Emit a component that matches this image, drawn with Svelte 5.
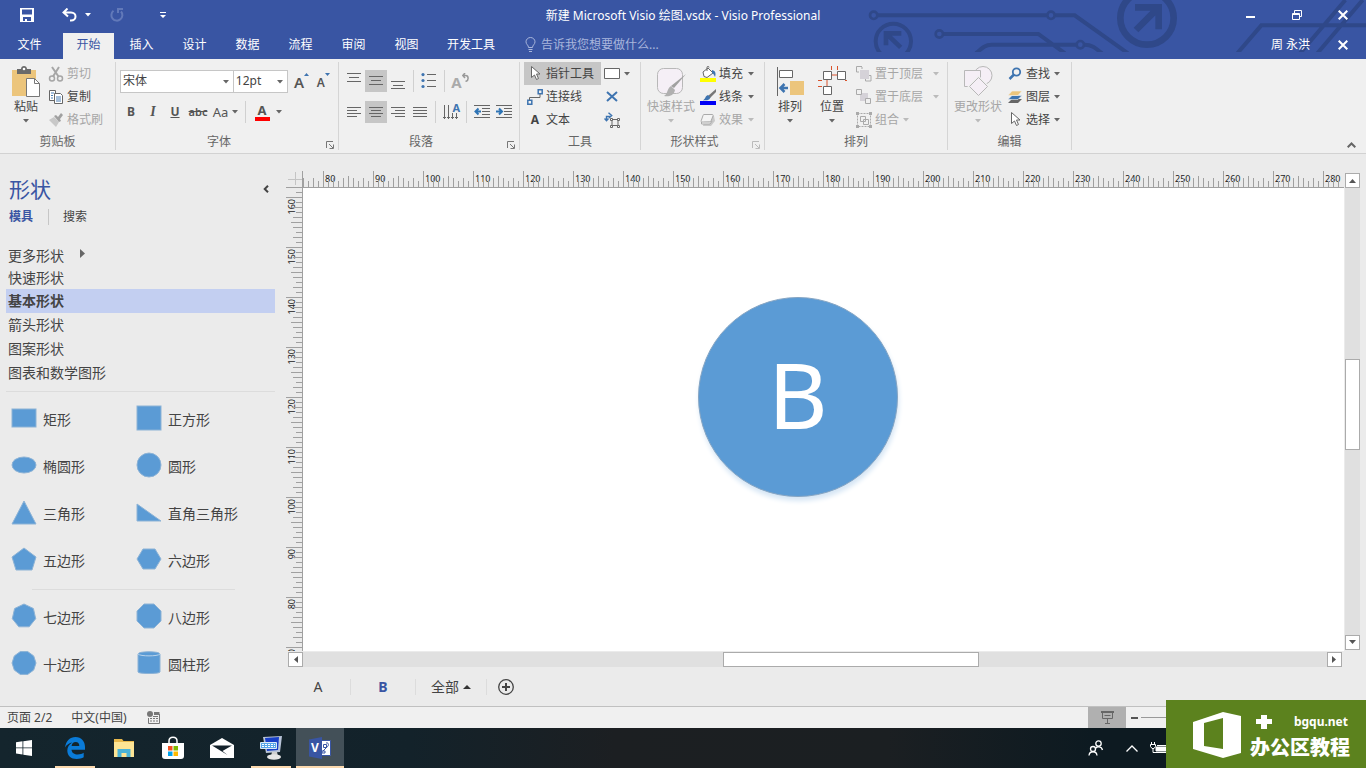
<script>
    const tabs = ['文件', '开始', '插入', '设计', '数据', '流程', '审阅', '视图', '开发工具'];
    const stencils = ['更多形状', '快速形状', '基本形状', '箭头形状', '图案形状', '图表和数学图形'];

    const basicShapes = [
        { name: '矩形', kind: 'rect', h: 18 },
        { name: '正方形', kind: 'rect', h: 24 },
        { name: '椭圆形', kind: 'ellipse', ry: 8 },
        { name: '圆形', kind: 'ellipse', ry: 12 },
        { name: '三角形', kind: 'poly', points: '12,1 24,24 0,24' },
        { name: '直角三角形', kind: 'poly', points: '0,4 0,21 24,21' },
        { name: '五边形', kind: 'poly', points: '12,1 24,10 20,23 4,23 0,10' },
        { name: '六边形', kind: 'poly', points: '6,2 18,2 24,12 18,22 6,22 0,12' }
    ];

    const moreShapes = [
        { name: '七边形', kind: 'poly', points: ring(7, -90) },
        { name: '八边形', kind: 'poly', points: '7,0 17,0 24,7 24,17 17,24 7,24 0,17 0,7' },
        { name: '十边形', kind: 'poly', points: ring(10, -72) },
        { name: '圆柱形', kind: 'can' }
    ];

    const hTicks = makeTicks(76, 284, 1);
    const vTicks = makeTicks(161, 60, -1);

    let activeTab = '开始';
    let activeStencil = '基本形状';
    let font = '宋体';
    let size = '12pt';
    let zoom = 50;
    let help = '';

    const nodes = [{ text: 'B', x: 395, y: 109, d: 200 }];

    function ring(count, start) {
        const out = [];
        for (let i = 0; i < count; i++) {
            const a = (start + i * 360 / count) * Math.PI / 180;
            out.push((12 + 12 * Math.cos(a)).toFixed(1) + ',' + (12 + 12 * Math.sin(a)).toFixed(1));
        }
        return out.join(' ');
    }

    function makeTicks(from, to, step) {
        const out = [];
        for (let v = from, i = 0; v !== to; v += step, i++) {
            let len = 6;
            if (v % 10 === 0) len = 16;
            else if (v % 5 === 0) len = 11;
            else if (v % 2 === 0) len = 9;
            out.push({ v, pos: i * 5, len });
        }
        return out;
    }
</script>

{#snippet caret()}
    <svg class="caret" width="6" height="4" viewBox="0 0 6 4" aria-hidden="true"><path d="M0 0h6L3 3.5z" fill="currentColor" /></svg>
{/snippet}

{#snippet launcher(name)}
    <button class="launcher" aria-label={name}>
        <svg width="8" height="8" viewBox="0 0 8 8" fill="none" stroke="currentColor"><path d="M.5 7V.5H7M3 3l4 4M7.500 3.500v4h-4" /></svg>
    </button>
{/snippet}

{#snippet shapeGrid(list)}
    <div class="shape-grid">
        {#each list as s}
            <button class="shape">
                <svg width="26" height="26" viewBox="-1 -1 26 26" fill="#5b9bd5" stroke="#8db3d6" stroke-width="1">
                    {#if s.kind === 'rect'}
                        <rect x="0" y={12 - s.h / 2} width="24" height={s.h} />
                    {:else if s.kind === 'ellipse'}
                        <ellipse cx="12" cy="12" rx="12" ry={s.ry} />
                    {:else if s.kind === 'poly'}
                        <polygon points={s.points} />
                    {:else}
                        <path d="M1 3c0-3 22-3 22 0v18c0 2-22 2-22 0z" />
                        <path d="M1 3c2 2.500 20 2.500 22 0" stroke="#b9d3ea" />
                    {/if}
                </svg>
                <span>{s.name}</span>
            </button>
        {/each}
    </div>
{/snippet}

<div class="app">
    <header class="header">
        <svg class="circuit" width="506" height="52" viewBox="0 0 1518 156" fill="none" stroke="#2f4889" stroke-width="12" aria-hidden="true">
            <circle cx="41" cy="46" r="11" stroke-width="8" />
            <circle cx="573" cy="46" r="11" stroke-width="8" />
            <circle cx="238" cy="102" r="11" stroke-width="8" />
            <circle cx="661" cy="134" r="11" stroke-width="8" />
            <path d="M54 46h506M586 46h58l160 114M251 102h284l80 58M348 160c20-18 30-26 46-26h254M674 134c20 0 30 8 52 26M1132 160l72-84h314M1320 160L1456 0M1372 160L1508 0" />
            <circle cx="861" cy="54" r="80" stroke-width="20" />
            <path d="M828 90l62-62M825 22h71v66" stroke-width="20" />
            <circle cx="100" cy="124" r="53" stroke-width="12" />
            <path d="M122 142L82 104M78 136v-36h46" stroke-width="14" />
        </svg>

        <div class="titlebar">
            <div class="quick">
                <button class="q-save" aria-label="保存">
                    <svg width="14" height="14" viewBox="0 0 14 14"><path fill="#fff" fill-rule="evenodd" d="M0 0h14v14H0zM2 1.500v5h10v-5zM3 9v4h2v-2h2v2h4V9z" /></svg>
                </button>
                <button class="q-undo" aria-label="撤消">
                    <svg width="15" height="14" viewBox="0 0 15 14" fill="none" stroke="#fff" stroke-width="2"><path d="M5.500 0.500L1.500 4.500l4.500 4M2 4.500h7c6 0 6 8 0 8H8" /></svg>
                    {@render caret()}
                </button>
                <button class="q-redo" aria-label="重复">
                    <svg width="14" height="14" viewBox="0 0 14 14" fill="none" stroke="#6279b9" stroke-width="2"><path d="M3.500 2.800A5.500 5.500 0 1 0 11 3.500M8 5V1h5" /></svg>
                </button>
                <button class="q-more" aria-label="自定义快速访问工具栏">
                    <svg width="6" height="6" viewBox="0 0 6 6" fill="#fff"><path d="M0 0h6v1H0zM0 3h6L3 6z" /></svg>
                </button>
            </div>
            <h1>新建 Microsoft Visio 绘图.vsdx - Visio Professional</h1>
            <div class="window-buttons">
                <button aria-label="最小化"><svg width="10" height="10" viewBox="0 0 10 10"><path d="M0 6h9v2H0z" fill="#fff" /></svg></button>
                <button aria-label="还原"><svg width="10" height="10" viewBox="0 0 10 10" fill="none" stroke="#fff"><path d="M.5 3.500h7v6h-7zM.5 4.500h7M2.500 3V.5h7v6H8" /></svg></button>
                <button aria-label="关闭"><svg width="10" height="10" viewBox="0 0 10 10" stroke="#fff" stroke-width="2"><path d="M.7.7l8.600 8.600M9.300.7L.7 9.300" /></svg></button>
            </div>
        </div>

        <nav class="tabs">
            {#each tabs as tab}
                <button class="tab" class:file={tab === '文件'} class:active={tab === activeTab} on:click={() => activeTab = tab}>{tab}</button>
            {/each}
            <label class="tell">
                <svg width="11" height="15" viewBox="0 0 11 15" fill="none" stroke="#a9b6dc"><path d="M3.500 10.500C3.500 8 1 7.500 1 4.800a4.500 4.300 0 0 1 9 0c0 2.700-2.500 3.200-2.500 5.700zM3.500 12.500h4M4 14.500h3" /></svg>
                <input type="text" bind:value={help} placeholder="告诉我您想要做什么..." aria-label="告诉我您想要做什么" />
            </label>
            <button class="user">周 永洪</button>
            <button class="close-doc" aria-label="关闭窗口"><svg width="10" height="10" viewBox="0 0 10 10" stroke="#fff" stroke-width="2"><path d="M.7.7l8.600 8.600M9.300.7L.7 9.300" /></svg></button>
        </nav>
    </header>

    <div class="ribbon">
        <section class="group clipboard">
            <div class="body">
                <button class="big">
                    <svg width="30" height="32" viewBox="0 0 30 32">
                        <path fill="#ecc57c" d="M1 4h24v26H1z" />
                        <path fill="#6a6a6a" d="M6 3h4c0-4 6-4 6 0h4v5H6z" /><circle cx="13" cy="3" r="1.300" fill="#fff" />
                        <path d="M15.500 12.500h8l5 5v13h-13z" fill="#fff" stroke="#777" /><path d="M23.500 12.500v5h5" fill="none" stroke="#777" />
                    </svg>
                    <span>粘贴</span>
                    {@render caret()}
                </button>
                <div class="col">
                    <button class="cmd off">
                        <svg width="16" height="16" viewBox="0 0 16 16" fill="none" stroke="currentColor" stroke-width="1.500"><path d="M4 1l6.500 9.500M11 1L5 10.500" stroke-width="2" /><circle cx="4" cy="12.500" r="2.500" /><circle cx="12" cy="12.500" r="2.500" /></svg>
                        剪切
                    </button>
                    <button class="cmd">
                        <svg width="16" height="16" viewBox="0 0 16 16" fill="#fff" stroke="#666"><path d="M1.500 1.500h6v10h-6z" /><path d="M6.500 4.500h6l2 2v8h-8z" /><path d="M3 4h3M3 6.500h2M3 9h2M8 8h5M8 10h5M8 12h5" stroke="#4a7fb5" /></svg>
                        复制
                    </button>
                    <button class="cmd off">
                        <svg width="16" height="16" viewBox="0 0 16 16"><path fill="#c8c8c8" d="M1 8l5-3 5 5-3 5z" /><path fill="#a0a0a0" d="M6 4l2-1 2 2 3-4 2 2-3 4 1 2-2 1z" /></svg>
                        格式刷
                    </button>
                </div>
            </div>
            <div class="caption"><span>剪贴板</span></div>
        </section>

        <section class="group font">
            <div class="body stack">
                <div class="row">
                    <label class="combo wide"><select bind:value={font} aria-label="字体"><option>宋体</option><option>黑体</option></select>{@render caret()}</label>
                    <label class="combo"><select bind:value={size} aria-label="字号"><option>12pt</option><option>14pt</option></select>{@render caret()}</label>
                    <button class="tool sized" aria-label="增大字号"><b class="a-large">A</b><svg width="5" height="4" viewBox="0 0 5 4"><path d="M2.500 0L5 3H0z" fill="#3e74b0" /></svg></button>
                    <button class="tool sized" aria-label="减小字号"><b class="a-small">A</b><svg width="5" height="4" viewBox="0 0 5 4"><path d="M2.500 3L5 0H0z" fill="#3e74b0" /></svg></button>
                </div>
                <div class="row">
                    <button class="tool"><b>B</b></button>
                    <button class="tool"><i>I</i></button>
                    <button class="tool"><b><u>U</u></b></button>
                    <button class="tool strike"><s>abc</s></button>
                    <button class="tool case">Aa{@render caret()}</button>
                    <span class="bar"></span>
                    <button class="tool case color"><b>A</b>{@render caret()}</button>
                </div>
            </div>
            <div class="caption"><span>字体</span>{@render launcher('字体设置')}</div>
        </section>

        <section class="group paragraph">
            <div class="body stack">
                <div class="row">
                    <button class="tool" aria-label="顶端对齐"><svg width="16" height="16" viewBox="0 0 16 16" stroke="#666"><path d="M1 .5h14M3 4.500h10M1 8.500h14" /></svg></button>
                    <button class="tool on" aria-label="中部对齐"><svg width="16" height="16" viewBox="0 0 16 16" stroke="#666"><path d="M1 3.500h14M3 7.500h10M1 11.500h14" /></svg></button>
                    <button class="tool" aria-label="底端对齐"><svg width="16" height="16" viewBox="0 0 16 16" stroke="#666"><path d="M1 8.500h14M3 12.500h10M1 15.500h14" /></svg></button>
                    <span class="bar"></span>
                    <button class="tool" aria-label="项目符号"><svg width="16" height="16" viewBox="0 0 16 16" stroke="#666"><path d="M6 1.500h9M6 7.500h9M6 13.500h9" /><g fill="#3e74b0" stroke="none"><circle cx="2" cy="1.600" r="1.600" /><circle cx="2" cy="7.500" r="1.600" /><circle cx="2" cy="13.500" r="1.600" /></g></svg></button>
                    <span class="bar"></span>
                    <button class="tool turn" aria-label="旋转文本"><b>A</b><svg width="7" height="9" viewBox="0 0 7 9" fill="none" stroke="#999" stroke-width="1.500"><path d="M3 0L.8 2.500 3 5M1 2.500h2.500c3.500 0 3.500 5 0 6" /></svg></button>
                </div>
                <div class="row">
                    <button class="tool" aria-label="左对齐"><svg width="16" height="16" viewBox="0 0 16 16" stroke="#666"><path d="M1 3.500h14M1 6.500h10M1 9.500h14M1 12.500h10" /></svg></button>
                    <button class="tool on" aria-label="居中"><svg width="16" height="16" viewBox="0 0 16 16" stroke="#666"><path d="M1 3.500h14M3 6.500h10M1 9.500h14M3 12.500h10" /></svg></button>
                    <button class="tool" aria-label="右对齐"><svg width="16" height="16" viewBox="0 0 16 16" stroke="#666"><path d="M1 3.500h14M5 6.500h10M1 9.500h14M5 12.500h10" /></svg></button>
                    <button class="tool" aria-label="两端对齐"><svg width="16" height="16" viewBox="0 0 16 16" stroke="#666"><path d="M1 3.500h14M1 6.500h14M1 9.500h14M1 12.500h14" /></svg></button>
                    <span class="bar"></span>
                    <button class="tool vert" aria-label="文字方向"><svg width="16" height="16" viewBox="0 0 16 16" fill="none" stroke="#666"><path d="M1.500 1v14M5.500 1v14M9.500 9v6M13.500 9v6M0 13.500h3M4 13.500h3M8 13.500h3M12 13.500h3" /></svg><b>A</b></button>
                    <span class="bar"></span>
                    <button class="tool" aria-label="减少缩进"><svg width="16" height="16" viewBox="0 0 16 16" stroke="#666"><path d="M0 1.500h16M8 4.500h8M8 7.500h8M8 10.500h8M0 13.500h16" /><path d="M7 7.500H1.500M4.500 4.500l-3 3 3 3" fill="none" stroke="#2e74b5" stroke-width="2" /></svg></button>
                    <button class="tool" aria-label="增加缩进"><svg width="16" height="16" viewBox="0 0 16 16" stroke="#666"><path d="M0 1.500h16M8 4.500h8M8 7.500h8M8 10.500h8M0 13.500h16" /><path d="M0 7.500h5.500M3 4.500l3 3-3 3" fill="none" stroke="#2e74b5" stroke-width="2" /></svg></button>
                </div>
            </div>
            <div class="caption"><span>段落</span>{@render launcher('段落设置')}</div>
        </section>

        <section class="group tools">
            <div class="body">
                <div class="col">
                    <button class="cmd on"><svg width="16" height="16" viewBox="0 0 16 16"><path d="M4.500 .5v11l3-2.500 2 4.500 2-1-2-4.500h3.500z" fill="#fff" stroke="#666" /></svg>指针工具</button>
                    <button class="cmd"><svg width="16" height="16" viewBox="0 0 16 16" fill="none" stroke="#3e74b0" stroke-width="1.500"><path d="M.8 11.200h4v4h-4zM11.200.8h4v4h-4z" /><path d="M2.500 11V8.500h10.500V5" stroke="#666" stroke-width="1" /></svg>连接线</button>
                    <button class="cmd"><b class="text-icon">A</b>文本</button>
                </div>
                <div class="col narrow">
                    <button class="cmd" aria-label="矩形"><svg width="16" height="16" viewBox="0 0 16 16"><path d="M.5 2.500h15v10H.5z" fill="#fff" stroke="#666" /></svg>{@render caret()}</button>
                    <button class="cmd" aria-label="连接点"><svg width="16" height="16" viewBox="0 0 16 16" fill="none" stroke="#3e74b0" stroke-width="2"><path d="M3 3l10 9M13 3L3 12" /></svg></button>
                    <button class="cmd" aria-label="文本块"><svg width="16" height="16" viewBox="0 0 16 16" fill="none" stroke="#666"><path d="M8 7.500h6v6H8z" /><path d="M6.500 6.500h2v2h-2zM13.500 6.500h2v2h-2zM6.500 13.500h2v2h-2zM13.500 13.500h2v2h-2z" fill="#fff" /><path d="M2.500 9V4.500h4M.5 6.500L2.500 8.700l2-2.200M4.500 0.700L7.700 3.500 5 6" stroke="#3e74b0" stroke-width="1.400" /></svg></button>
                </div>
            </div>
            <div class="caption"><span>工具</span></div>
        </section>

        <section class="group styles">
            <div class="body">
                <button class="big off">
                    <svg width="30" height="32" viewBox="0 0 30 32"><rect x="1.500" y="2.500" width="25" height="25" rx="6" fill="#f5eff6" stroke="#b8b8b8" /><path d="M30 8L18 22l-3-2z" fill="#a0a0a0" /><path d="M15 20l4 4c-1 6-7 7-11 6 4-2 3-8 7-10z" fill="#b0b0b0" /></svg>
                    <span>快速样式</span>
                    {@render caret()}
                </button>
                <div class="col">
                    <button class="cmd"><svg width="16" height="16" viewBox="0 0 16 16"><path fill="#fff" stroke="#666" d="M3 6l5-4 5 5-6 4.500-3-1z" /><path d="M7 5V1.500c0-1.500 2-1.500 2 0" fill="none" stroke="#666" /><path fill="#3e74b0" d="M12 4c4 1 4 4 3 7-1-2-1-3-3-4z" /><path fill="#ffff00" d="M0 12h16v4H0z" /></svg>填充{@render caret()}</button>
                    <button class="cmd"><svg width="16" height="16" viewBox="0 0 16 16"><path fill="#777" d="M16 0v3l-6 6-2-2z" /><path fill="#3e74b0" d="M8 6l2.500 2.500C9 12 6 11 3 11.500 6 9 5 7 8 6z" /><path fill="#0000f5" d="M0 12h16v4H0z" /></svg>线条{@render caret()}</button>
                    <button class="cmd off"><svg width="16" height="16" viewBox="0 0 16 16"><path fill="#c9c9c9" d="M5 4h9l1 5-4 5H3z" /><path fill="#f4f4f4" stroke="#aaa" d="M4 2.500h8c1 0 1.500.5 1 1.500l-2 5c-.3.700-.7 1-1.500 1H2c-1 0-1-.5-.8-1.300L3 3.500c.2-.7.400-1 1-1zM1.500 10v2h8.500l2-3" /></svg>效果{@render caret()}</button>
                </div>
            </div>
            <div class="caption"><span>形状样式</span>{@render launcher('形状样式设置')}</div>
        </section>

        <section class="group arrange">
            <div class="body">
                <button class="big">
                    <svg width="30" height="32" viewBox="0 0 30 32"><path d="M2.500 1v29" stroke="#666" /><path d="M4.500 4.500h13v7h-13z" fill="#fff" stroke="#666" /><path fill="#ecc57c" d="M15 15h14v14H15z" /><path d="M13 22H6M9.500 18L5.500 22l4 4" fill="none" stroke="#3e74b0" stroke-width="2.500" /></svg>
                    <span>排列</span>
                    {@render caret()}
                </button>
                <button class="big">
                    <svg width="30" height="32" viewBox="0 0 30 32"><path d="M1 14.500h4M14.500 0v4M20.500 0v4M14 9h6M1 20.500h4M10 14v6M28 14.500h2" stroke="#d9532c" /><path d="M6.500 5.500h8v8h-8zM20.500 5.500h8v8h-8zM6.500 20.500h8v8h-8z" fill="#fff" stroke="#666" /></svg>
                    <span>位置</span>
                    {@render caret()}
                </button>
                <div class="col">
                    <button class="cmd off"><svg width="16" height="16" viewBox="0 0 16 16"><path fill="#d5d2d8" d="M4 4h9v9H4z" /><path d="M6 .5H.5V6H3M6 1v2M15 9.500v5.500H9.500v-2M13 9.500h2" fill="none" stroke="#aaa" /></svg>置于顶层{@render caret()}</button>
                    <button class="cmd off"><svg width="16" height="16" viewBox="0 0 16 16"><path fill="#d5d2d8" d="M4 4h8v8H4z" /><path d="M.5.5h5v5h-5zM9.500 9.500h5v5h-5z" fill="#f0f0f0" stroke="#aaa" /></svg>置于底层{@render caret()}</button>
                    <button class="cmd off snug"><svg width="16" height="16" viewBox="0 0 16 16" fill="none" stroke="#aaa"><path d="M1.500 1.500h13v13h-13z" stroke-dasharray="2 1" /><path d="M4.500 4.500h5v5h-5zM7.500 7.500h5v5h-5z" /><path d="M0 0h3v3H0zM13 0h3v3h-3zM0 13h3v3H0zM13 13h3v3h-3z" fill="#aaa" stroke="none" /></svg>组合{@render caret()}</button>
                </div>
            </div>
            <div class="caption"><span>排列</span></div>
        </section>

        <section class="group edit">
            <div class="body">
                <button class="big off">
                    <svg width="30" height="32" viewBox="0 0 30 32" fill="#f5eff6" stroke="#b8b8b8"><circle cx="20" cy="9.500" r="9" /><path d="M1.500 4.500h16v16h-16z" /><path d="M15.500 11.500l9 9-9 9-9-9z" stroke="#f0f0f0" stroke-width="3" /><path d="M15.500 11.500l9 9-9 9-9-9z" /></svg>
                    <span>更改形状</span>
                    {@render caret()}
                </button>
                <div class="col">
                    <button class="cmd"><svg width="16" height="16" viewBox="0 0 16 16" fill="none" stroke="#3e74b0"><circle cx="9.500" cy="6" r="3.700" stroke-width="1.800" /><path d="M7 8.500L2.500 13" stroke-width="2.500" /></svg>查找{@render caret()}</button>
                    <button class="cmd"><svg width="16" height="16" viewBox="0 0 16 16"><path fill="#666" d="M1 14l4-4h10l-4 4z" /><path fill="#3e74b0" stroke="#f0f0f0" stroke-width=".6" d="M1 10.500l4-4h10l-4 4z" /><path fill="#ecc57c" stroke="#f0f0f0" stroke-width=".6" d="M1 6.500l4-4.500h10l-4 4.500z" /></svg>图层{@render caret()}</button>
                    <button class="cmd"><svg width="16" height="16" viewBox="0 0 16 16"><path d="M4.500 .5v11l3-2.500 2 4.500 2-1-2-4.500h3.500z" fill="#fff" stroke="#666" /></svg>选择{@render caret()}</button>
                </div>
            </div>
            <div class="caption"><span>编辑</span></div>
        </section>

        <button class="collapse" aria-label="折叠功能区"><svg width="9" height="6" viewBox="0 0 9 6" fill="none" stroke="#666" stroke-width="2"><path d="M.7 5.300L4.500 1.500l3.800 3.800" /></svg></button>
    </div>

    <main class="workspace">
        <aside class="panel">
            <div class="panel-head">
                <h2>形状</h2>
                <button aria-label="最小化形状窗口"><svg width="6" height="8" viewBox="0 0 6 8" fill="none" stroke="#444" stroke-width="2"><path d="M5 .7L1.700 4 5 7.300" /></svg></button>
            </div>
            <div class="panel-tabs">
                <button class="active">模具</button>
                <button>搜索</button>
            </div>
            <div class="stencils">
                {#each stencils as name}
                    <button class:active={name === activeStencil} on:click={() => activeStencil = name}>
                        {name}
                        {#if name === '更多形状'}
                            <svg class="more" width="5" height="9" viewBox="0 0 5 9"><path d="M0 0l5 4.500L0 9z" fill="#666" /></svg>
                        {/if}
                    </button>
                {/each}
            </div>
            {@render shapeGrid(basicShapes)}
            <hr>
            {@render shapeGrid(moreShapes)}
        </aside>

        <div class="editor">
            <div class="corner"><svg width="14" height="14" viewBox="0 0 14 14" stroke="#c4c4c4"><path d="M0 8.500h14M7.500 1v13" /></svg></div>
            <div class="ruler-h">
                <svg width="100%" height="16">
                    {#each hTicks as t}
                        <rect x={t.pos} y={16 - t.len} width="1" height={t.len} fill="#a0a0a0" />
                        {#if t.v % 10 === 0}<text x={t.pos + 2} y="11">{t.v}</text>{/if}
                    {/each}
                </svg>
            </div>
            <div class="ruler-v">
                <svg width="16" height="100%">
                    {#each vTicks as t}
                        <rect x={16 - t.len} y={t.pos + 4} width={t.len} height="1" fill="#a0a0a0" />
                        {#if t.v % 10 === 0}<text transform="translate(9 {t.pos + 6}) rotate(-90)" text-anchor="end">{t.v}</text>{/if}
                    {/each}
                </svg>
            </div>
            <div class="canvas">
                {#each nodes as n}
                    <div class="node" style="left:{n.x}px;top:{n.y}px;width:{n.d}px;height:{n.d}px">{n.text}</div>
                {/each}
            </div>
            <div class="scroll-v">
                <button aria-label="向上滚动"><svg width="7" height="4" viewBox="0 0 7 4"><path d="M3.500 0L7 4H0z" fill="#555" /></svg></button>
                <span class="before"></span><span class="thumb"></span><span class="after"></span>
                <button aria-label="向下滚动"><svg width="7" height="4" viewBox="0 0 7 4"><path d="M3.500 4L7 0H0z" fill="#555" /></svg></button>
            </div>
            <div class="scroll-h">
                <button aria-label="向左滚动"><svg width="4" height="7" viewBox="0 0 4 7"><path d="M0 3.500L4 0v7z" fill="#555" /></svg></button>
                <span class="before"></span><span class="thumb"></span><span class="after"></span>
                <button aria-label="向右滚动"><svg width="4" height="7" viewBox="0 0 4 7"><path d="M4 3.500L0 0v7z" fill="#555" /></svg></button>
            </div>
            <div class="pages">
                <button>A</button>
                <button class="active">B</button>
                <button class="all">全部<svg width="8" height="4" viewBox="0 0 8 4"><path d="M4 0l4 4H0z" fill="#333" /></svg></button>
                <button class="add" aria-label="插入页"><svg width="16" height="16" viewBox="0 0 16 16" fill="none" stroke="#444"><circle cx="8" cy="8" r="7.300" stroke-width="1.300" /><path d="M4 8h8M8 4v8" stroke-width="2" /></svg></button>
            </div>
        </div>
    </main>

    <footer class="status">
        <span>页面 2/2</span>
        <button class="lang">中文(中国)</button>
        <button aria-label="宏录制"><svg width="13" height="13" viewBox="0 0 13 13"><circle cx="3" cy="3" r="3" fill="#777" /><path d="M7 1h5.500v3H7z" fill="#777" /><path d="M1.500 7v5.500h11V3" fill="none" stroke="#777" /><path d="M3 7.500h2M6 7.500h2M9 7.500h2M3 10h2M6 10h2M9 10h2M6 5.500h5" stroke="#777" /></svg></button>
        <div class="zoom">
            <button class="present" aria-label="演示模式"><svg width="13" height="13" viewBox="0 0 13 13" fill="none" stroke="#666"><path d="M0 1h13" stroke-width="2" /><path d="M1.500 2v5.500h10V2M3.500 4.500h6M6.500 8v4M4 12.500h5" /></svg></button>
            <button class="minus" aria-label="缩小"><svg width="7" height="2" viewBox="0 0 7 2"><path d="M0 0h7v2H0z" fill="#555" /></svg></button>
            <input type="range" min="0" max="100" bind:value={zoom} aria-label="显示比例" />
        </div>
    </footer>

    <div class="taskbar">
        <button class="start" aria-label="开始菜单"><svg width="16" height="16" viewBox="0 0 16 16" fill="#fff"><path d="M0 2.200L6.500 1.300v6.200H0zM7.300 1.200L16 0v7.500H7.300zM0 8.300h6.500v6.200L0 13.600zM7.300 8.300H16V16l-8.700-1.200z" /></svg></button>
        <button class="running" aria-label="Edge"><svg width="22" height="22" viewBox="0 0 22 22"><path fill="#0a7bd8" d="M1 10.500C2 4 6 0 11.500 0 17.500 0 21 4.500 21 10v2.800H7.500c.2 3.200 3 4.700 6.200 4.700 2.500 0 4.500-.7 6-1.700v4.500c-1.800 1-4.200 1.700-7 1.700C7 22 3.300 18.600 3.300 13.500c0-3.600 2-6.500 5-8C5.200 6 2.700 7.700 1 10.500zM7.600 9h7.700c0-2.500-1.300-4-3.600-4S7.900 6.600 7.600 9z" /></svg></button>
        <button aria-label="文件资源管理器"><svg width="22" height="20" viewBox="0 0 22 20"><path fill="#e8b84c" d="M1 1h8l1.500 2H21v16H1z" /><path fill="#fde494" d="M1 4h20v15H1z" /><path fill="#4ab3d8" d="M4.500 19v-8h13v8h-4v-4h-5v4z" /></svg></button>
        <button aria-label="应用商店"><svg width="22" height="24" viewBox="0 0 22 24"><path d="M7 8V5c0-5 8-5 8 0v3" fill="none" stroke="#fff" stroke-width="1.500" /><path d="M0 7h22v13c0 2-1 3-3 3H3c-2 0-3-1-3-3z" fill="#fff" /><path fill="#f25022" d="M6 10h4.500v4.500H6z" /><path fill="#7fba00" d="M11.500 10H16v4.500h-4.500z" /><path fill="#00a4ef" d="M6 15.500h4.500V20H6z" /><path fill="#ffb900" d="M11.500 15.500H16V20h-4.500z" /></svg></button>
        <button aria-label="邮件"><svg width="24" height="20" viewBox="0 0 24 20"><path fill="#fff" d="M0 7L12 0l12 7v13H0z" /><path fill="#14222b" d="M2 7.500h20L12.500 13l5 4z" /></svg></button>
        <button class="running" aria-label="远程连接"><svg width="24" height="24" viewBox="0 0 24 24"><path fill="#b9c4d8" d="M4 1l19-1-2 16-14 1z" /><path fill="#1840c8" d="M6 2l14-1-1 13-11 1z" /><path fill="#58a6e8" stroke="#dbe8f6" d="M1.500 6.500h16v6h-16z" /><path d="M3 8.500h13M3 10.500h13" stroke="#fff" stroke-dasharray="2 1" /><path fill="#d0d0d0" d="M13 16h5l1 4h-7z" /><ellipse cx="15" cy="21" rx="7" ry="2.700" fill="#e6e6e6" /></svg></button>
        <button class="running current" aria-label="Visio"><svg width="22" height="22" viewBox="0 0 22 22"><path d="M12 3.500h9.500v15H12z" fill="#fff" stroke="#3955a3" /><path d="M14 14l4-4M14.500 7.500h3v3h-3zM17 6c3-1 3 3 1 4M13 14h3v2h-3z" fill="none" stroke="#3955a3" /><path fill="#3955a3" d="M0 2.500L13 0v22L0 19.500z" /></svg><b>V</b></button>
        <div class="tray">
            <button aria-label="人脉"><svg width="16" height="16" viewBox="0 0 16 16" fill="none" stroke="#fff" stroke-width="1.300"><circle cx="10.500" cy="3.500" r="2.700" /><path d="M7.500 8.500c1.500-2.500 6-2.500 7 1.500" /><circle cx="5" cy="9" r="2.500" /><path d="M1 15.500c.5-5 7.500-5 8 0" /></svg></button>
            <button aria-label="显示隐藏的图标"><svg width="12" height="7" viewBox="0 0 12 7" fill="none" stroke="#fff" stroke-width="1.300"><path d="M.5 6.500L6 1l5.500 5.500" /></svg></button>
            <button aria-label="电源"><svg width="18" height="12" viewBox="0 0 18 12" fill="none" stroke="#fff"><path d="M1.500 0v2M4.500 0v2M.5 2.500h5v2l-1.500 2h-2L.5 4.500zM3 7v3.500h14.500v-7H7" /><path d="M6 5h10v4H6z" fill="#fff" /></svg></button>
        </div>
    </div>

    <div class="badge">
        <svg width="48" height="46" viewBox="0 0 48 46"><path fill="#fff" fill-rule="evenodd" d="M0 10L30 0l18 4v37l-18 5L0 37l11-3 19 3V6L11 11v23L0 37z" /></svg>
        <div class="badge-text">
            <div class="badge-top">
                <svg width="16" height="14" viewBox="0 0 16 14"><path fill="#fff" d="M5 0h6v4h5v5h-5v5H5V9H0V4h5z" /></svg>
                <span>bgqu.net</span>
            </div>
            <strong>办公区教程</strong>
        </div>
    </div>
</div>

<style>
:global(body){
    margin:0;
    background:#ebebeb;
}

.app{
    position:relative;
    display:flex;
    flex-direction:column;
    height:100vh;
    overflow:hidden;
    font-family:"Noto Sans","Noto Sans CJK SC",sans-serif;
    font-size:12px;
    line-height:16px;
    color:#444;
}

button, input, select{
    font:inherit;
    color:inherit;
    background:none;
    border:0;
    padding:0;
    margin:0;
}

button{
    display:flex;
    align-items:center;
    justify-content:center;
    white-space:nowrap;
}

svg{
    flex:none;
    display:block;
}

/* title bar and tabs */

.header{
    position:relative;
    flex:none;
    background:#3955a3;
    color:#fff;
}

.circuit{
    position:absolute;
    right:0;
    top:0;
}

.titlebar{
    position:relative;
    display:grid;
    grid-template-columns:1fr auto 1fr;
    align-items:center;
    height:30px;
}

.titlebar h1{
    margin:0;
    padding-top:2px;
    font-size:12px;
    font-weight:400;
}

.quick{
    display:flex;
    align-items:center;
    padding-left:20px;
}

.q-undo{
    gap:8px;
    margin-left:28px;
}

.q-redo{
    margin-left:19px;
}

.q-more{
    margin-left:36px;
}

.window-buttons{
    display:flex;
    justify-content:flex-end;
}

.window-buttons button,
.close-doc{
    width:46px;
    height:30px;
}

.tabs{
    position:relative;
    display:flex;
    align-items:center;
    gap:2px;
    height:29px;
    padding-left:4px;
}

.tab{
    align-self:flex-end;
    height:26px;
    min-width:51px;
    padding:0 13px 2px;
}

.tab.file{
    margin-right:6px;
}

.tab.active{
    background:#f0f0f0;
    color:#3955a3;
}

.tell{
    display:flex;
    align-items:center;
    flex:1;
    gap:5px;
    margin-left:15px;
}

.tell input{
    flex:1;
    outline:none;
}

.tell input::placeholder{
    color:#a9b6dc;
    opacity:1;
}

.close-doc{
    margin-left:8px;
}

/* ribbon */

.ribbon{
    flex:none;
    display:flex;
    padding-top:3px;
    background:#f0f0f0;
    border-bottom:1px solid #d2d2d2;
}

.group{
    box-sizing:border-box;
    display:flex;
    flex-direction:column;
    height:88px;
    margin-bottom:3px;
    padding:0 4px;
    border-right:1px solid #d5d5d5;
}

.body{
    flex:none;
    box-sizing:border-box;
    display:flex;
    height:69px;
}

.stack{
    flex-direction:column;
    gap:9px;
    padding-top:8px;
}

.row{
    display:flex;
    align-items:center;
    height:22px;
}

.col{
    display:flex;
    flex-direction:column;
}

.caption{
    display:flex;
    justify-content:center;
    align-items:center;
    height:16px;
    margin:3px -4px 0;
    color:#666;
}

.caption span{
    flex:1;
    text-align:center;
}

.launcher{
    width:16px;
    height:16px;
    padding-top:6px;
    color:#777;
}

.styles .launcher{
    color:#bbb;
}

.clipboard{ width:116px; }
.font{ width:223px; }
.paragraph{ width:181px; }
.tools{ width:121px; }
.styles{ width:124px; }
.arrange{ width:183px; }
.edit{ width:124px; }

.big{
    flex-direction:column;
    justify-content:flex-start;
    width:42px;
    padding-top:4px;
    color:#444;
}

.big span{
    padding-top:1px;
}

.big .caret{
    margin-top:4px;
}

.styles .big,
.edit .big{
    width:52px;
}

.big.off,
.cmd.off{
    color:#a6a6a6;
}

.cmd{
    justify-content:flex-start;
    height:23px;
    gap:3px;
    padding:0 3px;
}

.cmd .caret{
    margin-left:2px;
}

.clipboard .cmd{
    padding:0;
}

.clipboard .big{
    width:44px;
}

.tools .cmd{
    padding-right:7px;
}

.arrange .cmd .caret{
    margin-left:7px;
}

.arrange .cmd.snug .caret{
    margin-left:1px;
}

.narrow .cmd .caret{
    margin-left:1px;
}

.edit .cmd .caret{
    margin-left:1px;
}

.caret{
    color:#666;
}

.off .caret{
    color:#bbb;
}

.q-undo .caret{
    color:#fff;
}

.on{
    background:#c6c6c6;
}

.text-icon{
    width:16px;
    text-align:center;
}

.combo{
    position:relative;
    box-sizing:border-box;
    width:56px;
    height:23px;
    margin-right:-1px;
    border:1px solid #c6c6c6;
    background:#fff;
}

.combo.wide{
    width:116px;
}

.combo select{
    width:100%;
    height:100%;
    padding-left:2px;
    appearance:none;
    outline:none;
}

.combo .caret{
    position:absolute;
    right:4px;
    top:9px;
    pointer-events:none;
}

.tool{
    width:22px;
    height:22px;
    color:#555;
}

.sized{
    align-items:flex-start;
}

.combo + .sized{
    margin-left:4px;
}

.sized svg,
.turn svg{
    margin-top:3px;
}

.a-large{
    font-size:15px;
    line-height:24px;
    font-weight:600;
}

.a-small{
    font-size:12px;
    line-height:26px;
    font-weight:600;
}

.tool i{
    font-family:"Liberation Serif",serif;
    font-weight:700;
    font-size:14px;
}

.strike{
    width:24px;
    font-size:11px;
    font-weight:600;
}

.case{
    width:31px;
    gap:4px;
    font-size:13px;
}

.color{
    gap:6px;
    width:36px;
}

.color b{
    padding:0 3px;
    line-height:14px;
    border-bottom:4px solid #f00;
}

.bar{
    width:1px;
    height:22px;
    margin:0 4px;
    background:#d0d0d0;
}

.turn{
    align-items:flex-start;
    color:#aaa;
}

.turn b{
    font-size:15px;
    line-height:24px;
}

.vert{
    position:relative;
}

.vert b{
    position:absolute;
    right:2px;
    top:1px;
    font-size:11px;
    line-height:12px;
    color:#3e74b0;
}

.collapse{
    align-self:flex-end;
    margin:0 10px 5px auto;
}

/* shapes panel */

.workspace{
    flex:1;
    display:flex;
    min-height:0;
    background:#ebebeb;
}

.panel{
    flex:none;
    box-sizing:border-box;
    width:286px;
    padding:21px 11px 0 6px;
}

.panel-head{
    display:flex;
    justify-content:space-between;
    align-items:center;
    padding:0 6px 0 3px;
}

.panel-head h2{
    margin:0;
    font-size:21px;
    line-height:28px;
    font-weight:400;
    color:#3955a3;
}

.panel-tabs{
    display:flex;
    margin:6px 0 20px 3px;
}

.panel-tabs button + button{
    margin-left:15px;
    padding-left:14px;
    border-left:1px solid #c6c6c6;
}

.panel-tabs .active{
    color:#3955a3;
    font-weight:700;
}

.stencils{
    padding-bottom:6px;
    border-bottom:1px solid #dcdcdc;
}

.stencils button{
    justify-content:flex-start;
    width:100%;
    height:24px;
    gap:16px;
    padding-left:2px;
    font-size:14px;
}

.stencils button:nth-child(-n+2){
    height:22px;
}

.stencils .active{
    background:#c3cff1;
    font-weight:700;
}

.more{
    margin-bottom:6px;
}

.shape-grid{
    display:grid;
    grid-template-columns:125px 125px;
    padding:4px 0 0 5px;
}

.shape{
    justify-content:flex-start;
    height:47px;
    gap:6px;
    font-size:14px;
}

.shape svg{
    margin-bottom:3px;
}

.panel hr{
    height:1px;
    margin:5px 40px 0 26px;
    border:0;
    background:#dcdcdc;
}

/* drawing area */

.editor{
    flex:1;
    min-width:0;
    display:grid;
    grid-template-columns:17px 1fr 16px;
    grid-template-rows:17px 1fr 16px 39px;
    padding:17px 6px 0 0;
}

.corner{
    display:flex;
    justify-content:flex-end;
    border-right:1px solid #a0a0a0;
    border-bottom:1px solid #a0a0a0;
}

.ruler-h{
    min-width:0;
    overflow:hidden;
    border-bottom:1px solid #a0a0a0;
}

.ruler-v{
    min-height:0;
    overflow:hidden;
    border-right:1px solid #a0a0a0;
}

.ruler-h text,
.ruler-v text{
    font-size:9px;
    fill:#222;
}

.canvas{
    position:relative;
    overflow:hidden;
    background:#fff;
}

.node{
    position:absolute;
    display:flex;
    align-items:center;
    justify-content:center;
    box-sizing:border-box;
    padding-bottom:7px;
    border:1px solid #86a5c3;
    border-radius:50%;
    background:#5b9bd5;
    box-shadow:1px 4px 5px #d6e6f5;
    color:#fff;
    font-size:92px;
    line-height:100px;
}

.scroll-v,
.scroll-h{
    display:flex;
    background:#e0e0e0;
}

.scroll-v{
    grid-column:3;
    grid-row:1 / 3;
    flex-direction:column;
    margin:2px 0 1px 1px;
}

.scroll-h{
    grid-column:1 / 3;
    grid-row:3;
    margin:1px 2px 0;
}

.scroll-v button,
.scroll-h button,
.thumb{
    box-sizing:border-box;
    flex:none;
    width:15px;
    height:15px;
    border:1px solid #ababab;
    background:#fff;
}

.scroll-v .before{ flex:171; }
.scroll-v .thumb{ flex:90; }
.scroll-v .after{ flex:185; }
.scroll-h .before{ flex:421; }
.scroll-h .thumb{ flex:254; }
.scroll-h .after{ flex:349; }

.pages{
    grid-column:1 / 4;
    display:flex;
    align-items:center;
}

.pages button{
    width:65px;
    height:16px;
    border-right:1px solid #dcdcdc;
    font-size:14px;
}

.pages .active{
    color:#3955a3;
    font-weight:700;
}

.pages .all{
    width:71px;
    gap:4px;
}

.pages .add{
    width:38px;
    border:0;
}

/* status bar */

.status{
    flex:none;
    display:flex;
    align-items:center;
    height:21px;
    padding-left:7px;
    border-top:1px solid #c0c0c0;
    background:#f0f0f0;
}

.lang{
    margin:0 20px 0 19px;
}

.zoom{
    display:flex;
    align-items:center;
    margin-left:auto;
}

.present{
    width:38px;
    height:21px;
    background:#b0b0b0;
}

.minus{
    margin:0 3px 0 5px;
}

.zoom input{
    width:225px;
    height:1px;
    appearance:none;
    background:#999;
}

.zoom input::-webkit-slider-thumb{
    appearance:none;
    width:5px;
    height:11px;
    background:#666;
}

/* taskbar */

.taskbar{
    flex:none;
    display:flex;
    gap:1px;
    height:40px;
    background:linear-gradient(90deg,#14252d,#13222a 30%,#1c1f22 45%,#1b1f22 65%,#0d1a21 80%);
}

.taskbar button{
    position:relative;
    width:48px;
    height:40px;
}

.taskbar .start{
    margin-right:2px;
}

.running::after{
    content:"";
    position:absolute;
    left:4px;
    right:4px;
    bottom:0;
    height:2px;
    background:#fbd9ae;
}

.current{
    background:#435058;
}

.current::after{
    left:0;
    right:0;
}

.current b{
    position:absolute;
    left:15px;
    top:12px;
    color:#fff;
}

.taskbar .tray{
    display:flex;
    margin:0 198px 0 auto;
}

.taskbar .tray button{
    width:36px;
}

.taskbar .tray button:last-child{
    width:18px;
}

/* corner badge */

.badge{
    position:absolute;
    right:0;
    bottom:0;
    box-sizing:border-box;
    display:flex;
    align-items:center;
    gap:9px;
    width:200px;
    height:68px;
    padding:2px 0 0 27px;
    background:#5c821e;
    color:#fff;
}

.badge-text{
    padding-top:6px;
}

.badge-top{
    display:flex;
    align-items:center;
    justify-content:space-between;
    padding:0 2px 0 6px;
    font-weight:700;
}

.badge strong{
    display:block;
    margin-top:4px;
    font-size:20px;
    line-height:28px;
    font-weight:900;
}
</style>
